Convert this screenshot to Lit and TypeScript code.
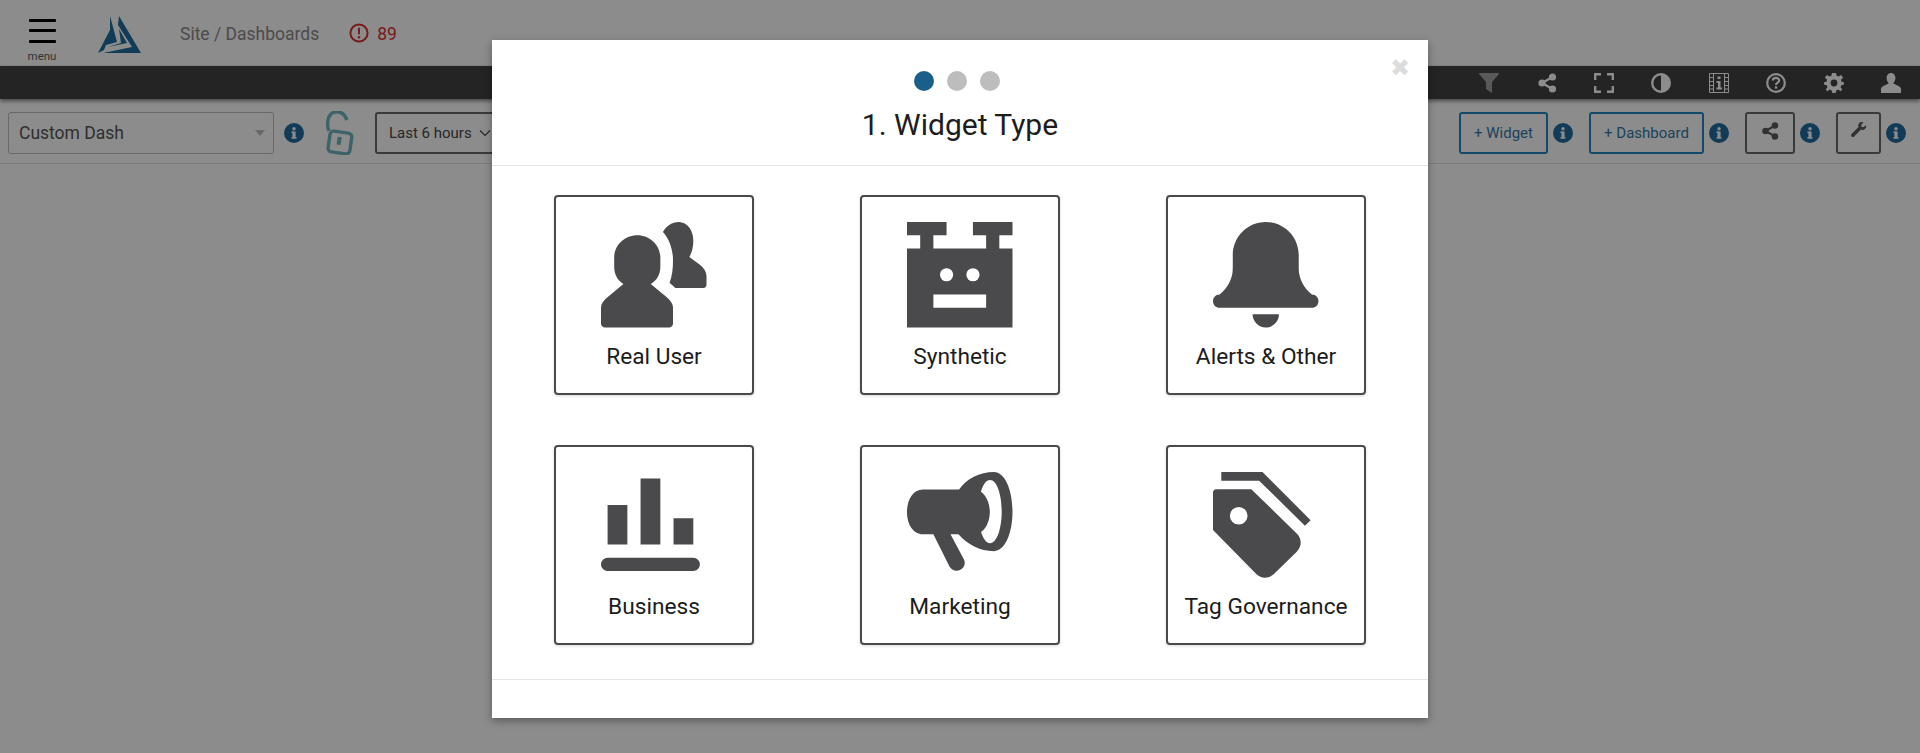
import { LitElement, html, css, svg } from "lit";
import { customElement } from "lit/decorators.js";

const info = html`<svg class="info" viewBox="0 0 20 20"><circle cx="10" cy="10" r="10" fill="#1f6c9e"/><rect x="8.4" y="8.5" width="3.2" height="7" fill="#fff"/><rect x="7.4" y="8.5" width="2" height="1.4" fill="#fff"/><rect x="7.4" y="14.2" width="5.2" height="1.4" fill="#fff"/><circle cx="10" cy="5.8" r="1.7" fill="#fff"/></svg>`;

const shareIcon = (c: string) => svg`<g fill="${c}"><circle cx="15.5" cy="4" r="3.6"/><circle cx="15.5" cy="16" r="3.6"/><circle cx="5" cy="10" r="3.6"/><path d="M5 10L15.5 4M5 10L15.5 16" stroke="${c}" stroke-width="2.4"/></g>`;

const cards = [
  {
    label: "Real User",
    icon: svg`<path d="M2.75 1C1.79 1 1 1.75 1 2.7V3.4C1 3.95 1.25 4.45 1.7 4.7L.56 5.64C.2 5.9 0 6.2 0 6.46V7.7c0 .17.13.3.3.3h4.86c.17 0 .3-.13.3-.3V6.46C5.46 6.2 5.26 5.9 4.92 5.64L3.77 4.7C4.25 4.45 4.5 3.95 4.5 3.4V2.7C4.5 1.75 3.71 1 2.75 1z"/><path d="M4.7 .75C4.95 .3 5.4 0 5.9 0 6.55 0 7 .65 7 1.4 7 1.9 6.9 2.3 6.7 2.65L7.5 3.25C7.8 3.5 8 3.8 8 4.1V4.75C8 4.9 7.9 5 7.75 5H5.64L5.2 4.6C5.4 4.1 5.46 3.5 5.46 2.9 5.46 2.1 5.2 1.3 4.7 .75z"/>`,
  },
  {
    label: "Synthetic",
    icon: svg`<path fill-rule="evenodd" d="M0 0H3V1H2V2H6V1H5V0H8V1H7V2H8V8H0V2H1V1H0ZM2 5.5V6.5H6V5.5Z"/><circle cx="3" cy="4" r=".5" fill="#fff"/><circle cx="5" cy="4" r=".5" fill="#fff"/>`,
  },
  {
    label: "Alerts & Other",
    icon: svg`<path d="M4 0C2.62 0 1.5 1.12 1.5 2.5V3.5C1.5 4.3 1.1 5 .5 5.5 .22 5.5 0 5.72 0 6s.22.5.5.5h7c.28 0 .5-.22.5-.5s-.22-.5-.5-.5C6.9 5 6.5 4.3 6.5 3.5V2.5C6.5 1.12 5.38 0 4 0zM3 7C3 7.55 3.45 8 4 8s1-.45 1-1H3z"/>`,
  },
  {
    label: "Business",
    icon: svg`<path d="M.5 2.5H2V5.5H.5ZM3 .5H4.5V5.5H3ZM5.5 3.5H7V5.5H5.5Z"/><rect x="0" y="6.5" width="7.5" height="1" rx=".5"/>`,
  },
  {
    label: "Marketing",
    icon: svg`<path fill-rule="evenodd" d="M3.95 1.33C4.5.5 5.5 0 6.6 0 7.4 0 8 1.3 8 3 8 4.7 7.4 6 6.6 6 5.5 6 4.6 5.5 3.9 4.72ZM6.3.6C5.8.6 5.42 1.67 5.42 3S5.8 5.4 6.3 5.4 7.18 4.33 7.18 3 6.8.6 6.3.6Z"/><path d="M1.2 1.33H5.1C5.75 1.33 6.28 2.1 6.28 3.03S5.75 4.72 5.1 4.72H3.3L4.3 6.6C4.47 6.92 4.35 7.25 4.05 7.42 3.75 7.58 3.4 7.47 3.22 7.17L2 4.72H1.2C.5 4.72 0 4 0 3.03S.5 1.33 1.2 1.33Z"/>`,
  },
  {
    label: "Tag Governance",
    icon: svg`<path d="M.63 0H3.75L7.4 3.65 6.97 4.07 3.5.66H.63Z"/><path fill-rule="evenodd" d="M0 1.55C0 1.4.1 1.3.25 1.3H2.9L6.35 4.66C6.75 5.05 6.75 5.65 6.35 6.05L4.6 7.75C4.2 8.1 3.65 8.1 3.3 7.75L0 4.4ZM1.95 2.65A.67 .67 0 1 0 1.95 3.99 .67 .67 0 1 0 1.95 2.65Z"/>`,
  },
];

@customElement("app-root")
export class AppRoot extends LitElement {
  static styles = css`
    :host { display: block; position: relative; width: 1920px; height: 753px; overflow: hidden; font-family: Roboto, "Liberation Sans", sans-serif; background: #fff; }
    .topline { height: 1px; background: #fff; }
    .head { height: 65px; display: flex; align-items: center; background: #fff; }
    .menu { margin-left: 25px; width: 34px; display: flex; flex-direction: column; align-items: center; font-size: 11.5px; color: #5c5c5c; line-height: 14px; padding-top: 14px; }
    .burger { width: 27px; height: 24px; display: flex; flex-direction: column; justify-content: space-between; margin-bottom: 6px; }
    .burger i { display: block; height: 3px; background: #000; border-radius: 1px; }
    .logo { width: 44px; height: 40px; margin-left: 39px; }
    .crumb { font-size: 17.5px; color: #8a8a8a; margin-left: 38px; }
    .alert { width: 20px; height: 20px; margin-left: 30px; margin-top: -2px; }
    .count { font-size: 17.5px; color: #d93030; margin-left: 8px; }
    .dark { height: 33px; background: #424242; display: flex; align-items: center; justify-content: flex-end; gap: 37.4px; padding-right: 19px; box-shadow: 0 2px 4px rgba(0,0,0,.5); position: relative; }
    .dark svg { width: 20px; height: 20px; display: block; }
    .sub { height: 65px; border-bottom: 1px solid #e0e0e0; display: flex; align-items: center; padding: 3px 14px 0 8px; box-sizing: border-box; }
    .select { width: 266px; height: 42px; box-sizing: border-box; border: 1px solid #bdbdbd; border-radius: 3px; display: flex; align-items: center; justify-content: space-between; padding: 1px 8px 0 10px; font-size: 17.5px; color: #555; }
    .caret { width: 0; height: 0; border-left: 5px solid transparent; border-right: 5px solid transparent; border-top: 6px solid #bdbdbd; }
    .info { width: 20px; height: 20px; flex: none; display: block; margin-left: 5px; }
    .select + .info { margin-left: 10px; }
    .lock { width: 28px; height: 44px; margin-left: 22px; flex: none; }
    .btn { height: 42px; box-sizing: border-box; border: 2px solid #6b6b6b; border-radius: 3px; display: flex; align-items: center; justify-content: center; font-size: 15px; color: #484848; flex: none; }
    .range { width: 140px; margin-left: 21px; gap: 6px; justify-content: flex-start; padding-left: 12px; }
    .range svg { width: 14px; height: 14px; margin: 0; }
    .spacer { flex: 1; }
    .blue { border-color: #2488c0; color: #3478a8; }
    .w1 { width: 89px; }
    .w2 { width: 115px; margin-left: 16px; }
    .w3 { width: 50px; margin-left: 16px; }
    .w4 { width: 45px; margin-left: 16px; }
    .share { width: 18px; height: 18px; margin-top: -4px; }
    .wrench { width: 16px; height: 16px; margin-top: -6px; }
    .overlay { position: absolute; inset: 0; background: rgba(0,0,0,.45); display: flex; justify-content: center; align-items: flex-start; padding-top: 40px; box-sizing: border-box; }
    .modal { position: relative; width: 936px; height: 678px; background: #fff; display: flex; flex-direction: column; box-shadow: 0 3px 8px rgba(0,0,0,.35); }
    .mhead { height: 126px; box-sizing: border-box; border-bottom: 1px solid #e5e5e5; display: flex; flex-direction: column; align-items: center; padding-top: 31px; }
    .dots { display: flex; gap: 13px; margin-left: -7px; }
    .dots i { width: 20px; height: 20px; border-radius: 50%; background: #bdbdbd; }
    .dots i.on { background: #1a5f8a; }
    h1 { margin: 15px 0 0; font-size: 30px; line-height: 38px; font-weight: 400; color: #1d1d1d; }
    .close { position: absolute; top: 14px; right: 18px; font-size: 24px; line-height: 28px; color: #dcdcdc; font-family: "DejaVu Sans", sans-serif; }
    .grid { flex: 1; display: grid; grid-template-columns: repeat(3, 200px); grid-auto-rows: 200px; column-gap: 106px; row-gap: 50px; justify-content: center; padding-top: 29px; box-sizing: border-box; border-bottom: 1px solid #e5e5e5; }
    .card { box-sizing: border-box; border: 2px solid #4a4a4a; border-radius: 4px; display: flex; flex-direction: column; align-items: center; padding-top: 25px; box-shadow: 0 1px 3px rgba(0,0,0,.15); }
    .card svg { width: 105.5px; height: 105.5px; fill: #4a4a4c; display: block; }
    .card span { margin-top: 15px; font-size: 22.7px; line-height: 28px; color: #1c1c1c; white-space: nowrap; }
    .foot { height: 38px; }
  `;

  render() {
    return html`
      <div class="topline"></div>
      <div class="head">
        <div class="menu"><div class="burger"><i></i><i></i><i></i></div>menu</div>
        <svg class="logo" viewBox="0 0 44 40" fill="#1f6c9e"><path d="M12 2L19 28 8 31 6 36 0 39 12 16Z"/><path d="M21 2L43 39H5L34 33 20 11Z"/><path d="M21 15L29 29 10 33 23 29Z"/></svg>
        <div class="crumb">Site / Dashboards</div>
        <svg class="alert" viewBox="0 0 20 20"><circle cx="10" cy="10" r="8.6" fill="none" stroke="#d93030" stroke-width="2"/><rect x="9" y="4.6" width="2" height="7" rx="1" fill="#d93030"/><circle cx="10" cy="14.2" r="1.2" fill="#d93030"/></svg>
        <div class="count">89</div>
      </div>
      <div class="dark">
        <svg viewBox="0 0 20 20"><path fill="#a2a2a2" d="M0 1C0 .4.4 0 1 0H19C19.6 0 20 .4 20 1L13 9V20L7 16V9Z"/></svg>
        <svg viewBox="0 0 20 20">${shareIcon("#fff")}</svg>
        <svg viewBox="0 0 20 20"><path fill="none" stroke="#fff" stroke-width="2.4" d="M1.2 7V1.2H7M13 1.2H18.8V7M18.8 13V18.8H13M7 18.8H1.2V13"/></svg>
        <svg viewBox="0 0 20 20"><circle cx="10" cy="10" r="8.8" fill="none" stroke="#fff" stroke-width="2.4"/><path fill="#fff" d="M10 1A9 9 0 0 1 10 19Z"/></svg>
        <svg viewBox="0 0 20 20"><path fill="none" stroke="#fff" d="M.5.5H19.5V19.5H.5ZM4.5.5V19.5M15.5.5V19.5M.5 4.5H4.5M.5 8.5H4.5M.5 12.5H4.5M.5 16H4.5M15.5 4.5H19.5M15.5 8.5H19.5M15.5 12.5H19.5M15.5 16H19.5"/><path fill="#fff" d="M8.5 3.5H11.5V6H8.5ZM7.5 8H11.5V14.5H13V16.5H7.5V14.5H9V10H7.5Z"/></svg>
        <svg viewBox="0 0 20 20"><circle cx="10" cy="10" r="8.8" fill="none" stroke="#fff" stroke-width="2.2"/><path fill="none" stroke="#fff" stroke-width="2.2" d="M6.8 7.5C6.8 5.8 8.2 4.9 10 4.9S13.2 6 13.2 7.5C13.2 9.6 10 9.6 10 12"/><rect x="8.8" y="13.2" width="2.4" height="2.4" fill="#fff"/></svg>
        <svg viewBox="0 0 20 20"><path fill-rule="evenodd" fill="#fff" d="M8 0H12L12.6 2.8 14.6 3.6 17 2 18 3 19 5 17 6.6 17.3 8.6 20 9.4V11.6L17.3 12.3 16.6 14.3 18.2 16.6 16.6 18.2 14.3 16.6 12.3 17.4 11.6 20H8.4L7.7 17.4 5.7 16.6 3.4 18.2 1.8 16.6 3.4 14.3 2.7 12.3 0 11.6V9.4L2.7 8.6 3 6.6 1 5 2 3 3 2 5.4 3.6 7.4 2.8ZM10 6.6A3.4 3.4 0 1 0 10 13.4 3.4 3.4 0 1 0 10 6.6Z"/></svg>
        <svg viewBox="0 0 20 20"><path fill="#fff" d="M10 0C7.4 0 5.6 2.2 5.6 4.8S6.6 9 7.8 10.6C5 12 0 13.6 0 16V20H20V16C20 13.6 15 12 12.2 10.6 13.4 9 14.4 7.4 14.4 4.8S12.6 0 10 0Z"/></svg>
      </div>
      <div class="sub">
        <div class="select">Custom Dash<span class="caret"></span></div>
        ${info}
        <svg class="lock" viewBox="0 0 28 44"><path fill="none" stroke="#6fb3bf" stroke-width="3.4" d="M3 20C0 12 2 2 9 1 15 0 19 4 21 9"/><rect x="3" y="21" width="22" height="21" rx="4" transform="rotate(8 14 31)" fill="none" stroke="#6fb3bf" stroke-width="3.4"/><rect x="11" y="26" width="4" height="8" fill="#6fb3bf" transform="rotate(8 14 31)"/></svg>
        <div class="btn range">Last 6 hours<svg viewBox="0 0 14 14"><path d="M2 4.5L7 9.5 12 4.5" fill="none" stroke="#484848" stroke-width="1.2"/></svg></div>
        <div class="spacer"></div>
        <div class="btn blue w1">+ Widget</div>${info}
        <div class="btn blue w2">+ Dashboard</div>${info}
        <div class="btn w3"><svg class="share" viewBox="0 0 20 20">${shareIcon("#5b5b5b")}</svg></div>${info}
        <div class="btn w4"><svg class="wrench" viewBox="0 0 20 20"><path fill="#5b5b5b" d="M13.5 0C10.9 0 9 2 9 4.5 9 5.2 9.2 5.8 9.4 6.3L.7 15C-.2 15.9-.2 17.3.7 18.2 1.6 19.1 3 19.1 3.9 18.2L12.6 9.5C13.1 9.8 13.7 10 14.5 10 17 10 19 8 19 5.4 19 4.9 18.9 4.4 18.8 4L15.4 6.5 12.8 5.7 13 3 15.6.5C14.9.2 14.2 0 13.5 0Z"/></svg></div>${info}
      </div>
      <div class="overlay">
        <div class="modal">
          <div class="close">✖</div>
          <div class="mhead">
            <div class="dots"><i class="on"></i><i></i><i></i></div>
            <h1>1. Widget Type</h1>
          </div>
          <div class="grid">
            ${cards.map((c) => html`<div class="card"><svg viewBox="0 0 8 8">${c.icon}</svg><span>${c.label}</span></div>`)}
          </div>
          <div class="foot"></div>
        </div>
      </div>
    `;
  }
}
